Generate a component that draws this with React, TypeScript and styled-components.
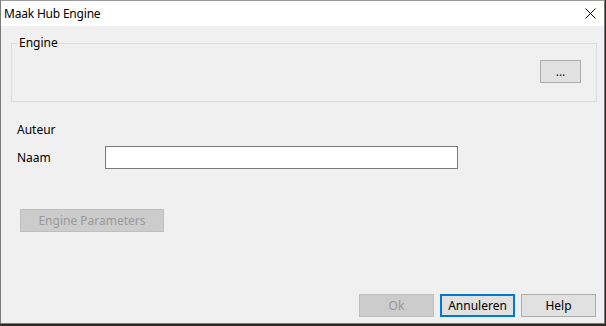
import styled, { createGlobalStyle } from 'styled-components';

const GlobalStyle = createGlobalStyle`
  html, body {
    margin: 0;
    padding: 0;
    background: #2f2923;
  }
  body {
    font-family: 'Segoe UI', 'Noto Sans', 'Liberation Sans', sans-serif;
    font-size: 12px;
  }
`;

const Window = styled.div`
  width: 605px;
  height: 324px;
  box-sizing: border-box;
  border: 1px solid #7a7a7a;
  border-top-color: #9a9a9a;
  background: #f0f0f0;
  display: flex;
  flex-direction: column;
  color: #000;
`;

const TitleBar = styled.div`
  height: 25px;
  flex: none;
  background: #fff;
  display: flex;
  align-items: center;
  justify-content: space-between;
  padding: 0 8px 0 3px;
  line-height: 16px;
  letter-spacing: -0.2px;
`;

const CloseIcon = styled.svg`
  width: 11px;
  height: 11px;
  display: block;
`;

const Body = styled.div`
  flex: 1;
  display: flex;
  flex-direction: column;
  padding: 9px 0 6px 0;
  line-height: 16px;
`;

const GroupBox = styled.fieldset`
  margin: 0 7px 0 10px;
  padding: 0 15px 18px 0;
  border: 1px solid #dcdcdc;
  display: flex;
  justify-content: flex-end;
  min-width: 0;
`;

const Legend = styled.legend`
  margin-left: 6px;
  padding: 0 1px;
  font-size: 12px;
  line-height: 16px;
`;

const Button = styled.button<{ $width: number; $variant?: 'default' | 'disabled' }>`
  width: ${(p) => p.$width}px;
  height: 23px;
  box-sizing: border-box;
  margin: 0;
  padding: 0;
  font-family: inherit;
  font-size: 12px;
  line-height: 16px;
  background: ${(p) => (p.$variant === 'disabled' ? '#cccccc' : '#e1e1e1')};
  color: ${(p) => (p.$variant === 'disabled' ? '#9a9a9a' : '#000')};
  border: ${(p) =>
    p.$variant === 'default'
      ? '2px solid #0078d7'
      : p.$variant === 'disabled'
      ? '1px solid #bfbfbf'
      : '1px solid #adadad'};
  border-radius: 0;
`;

const BrowseButton = styled(Button)`
  margin-top: 9px;
  color: #1a1a40;
`;

const Label = styled.div`
  padding-left: 16px;
`;

const SectionLabel = styled(Label)`
  margin-top: 20px;
`;

const FieldRow = styled.div`
  display: flex;
  align-items: center;
  margin-top: 8px;
`;

const FieldLabel = styled.div`
  width: 88px;
  padding-left: 16px;
`;

const TextInput = styled.input`
  width: 353px;
  height: 23px;
  box-sizing: border-box;
  margin: 0;
  border: 1px solid #7a7a7a;
  background: #fff;
  font-family: inherit;
  font-size: 12px;
  padding: 0 3px;
  outline: none;
`;

const ParamRow = styled.div`
  margin-top: 40px;
  padding-left: 19px;
`;

const Footer = styled.div`
  margin-top: auto;
  display: flex;
  justify-content: flex-end;
  gap: 6px;
  padding-right: 8px;
`;

function App() {
  return (
    <>
      <GlobalStyle />
      <Window>
        <TitleBar>
          <span>Maak Hub Engine</span>
          <CloseIcon viewBox="0 0 11 11">
            <path d="M0.5 0.5 L10.5 10.5 M10.5 0.5 L0.5 10.5" stroke="#000" strokeWidth="1" fill="none" />
          </CloseIcon>
        </TitleBar>
        <Body>
          <GroupBox>
            <Legend>Engine</Legend>
            <BrowseButton $width={41}>...</BrowseButton>
          </GroupBox>
          <SectionLabel>Auteur</SectionLabel>
          <FieldRow>
            <FieldLabel>Naam</FieldLabel>
            <TextInput type="text" />
          </FieldRow>
          <ParamRow>
            <Button $width={144} $variant="disabled" disabled>
              Engine Parameters
            </Button>
          </ParamRow>
          <Footer>
            <Button $width={75} $variant="disabled" disabled>
              Ok
            </Button>
            <Button $width={75} $variant="default">
              Annuleren
            </Button>
            <Button $width={75}>Help</Button>
          </Footer>
        </Body>
      </Window>
    </>
  );
}

export default App;
